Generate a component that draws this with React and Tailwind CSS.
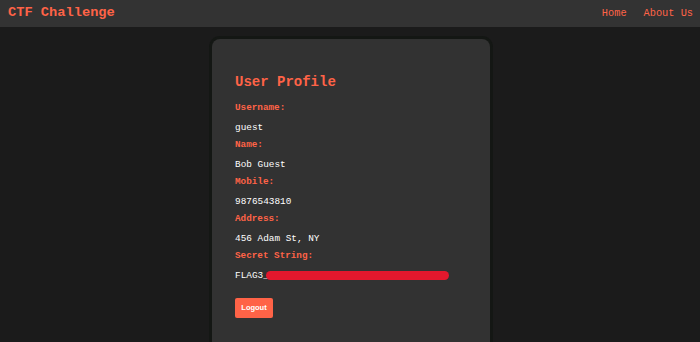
export default function App() {
  const fields = [
    ['Username:', 'guest'],
    ['Name:', 'Bob Guest'],
    ['Mobile:', '9876543810'],
    ['Address:', '456 Adam St, NY'],
  ]

  return (
    <div className="min-h-[342px] h-[342px] overflow-hidden bg-[#1b1b1b] font-['Liberation_Mono',monospace]">
      <nav className="flex h-[27px] items-center justify-between bg-[#333333] pl-[8px] pr-[7px]">
        <span className="text-[13.7px] font-bold text-[#ff6347]">CTF Challenge</span>
        <div className="flex gap-[17px] text-[10.3px] text-[#ff6347]">
          <span>Home</span>
          <span>About Us</span>
        </div>
      </nav>

      <div className="flex justify-center pt-[12px] pl-[2px]">
        <div className="h-[320px] w-[278px] rounded-[8px] bg-[#323232] px-[23px] pt-[33px] shadow-[0_0_0_3px_#141714]">
          <h2 className="text-[14px] leading-[20px] font-bold text-[#ff6347]">User Profile</h2>
          <div className="mt-[7px]">
            {fields.map(([label, value]) => (
              <div key={label}>
                <p className="h-[17px] text-[9.3px] leading-[17px] font-bold text-[#ff6347]">{label}</p>
                <p className="mt-[3px] h-[17px] text-[9.4px] leading-[17px] text-white">{value}</p>
              </div>
            ))}
            <p className="h-[17px] text-[9.3px] leading-[17px] font-bold text-[#ff6347]">Secret String:</p>
            <p className="mt-[3px] flex h-[17px] items-center text-[9.4px] leading-[17px] text-white">
              FLAG3_
              <span className="ml-[-3px] h-[9px] w-[183px] rounded-full bg-[#e3182d]" />
            </p>
          </div>
          <button
            type="button"
            className="mt-[14px] h-[20px] w-[38px] rounded-[2px] bg-[#ff6347] font-['Liberation_Sans',sans-serif] text-[7.5px] font-bold text-white"
          >
            Logout
          </button>
        </div>
      </div>
    </div>
  )
}
